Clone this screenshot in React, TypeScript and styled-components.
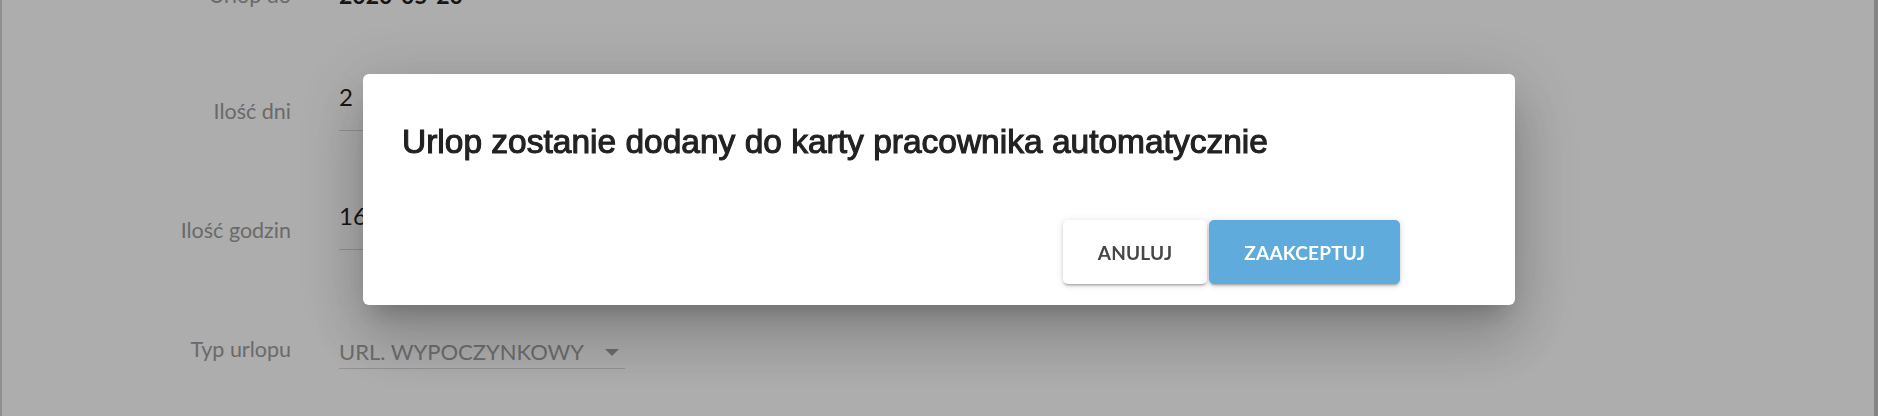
import React from "react";
import styled, { createGlobalStyle } from "styled-components";

const GlobalStyle = createGlobalStyle`
  html, body {
    margin: 0;
    padding: 0;
    background: #ffffff;
    font-family: Lato, "Open Sans", sans-serif;
    overflow: hidden;
  }
  * { box-sizing: border-box; }
`;

const Page = styled.div`
  width: 1878px;
  height: 416px;
  overflow: hidden;
  background: #ffffff;
  border-left: 2px solid #d3d3d3;
  border-right: 4px solid #c4c4c4;
`;

const Form = styled.div`
  display: flex;
  flex-direction: column;
  margin-top: -111px;
`;

const Row = styled.div`
  display: grid;
  grid-template-columns: 289px 286px;
  column-gap: 48px;
  align-items: end;
  height: 119px;
`;

const Label = styled.div`
  font-family: Lato, sans-serif;
  font-size: 21.5px;
  line-height: 24px;
  color: #9c9c9c;
  text-align: right;
  margin-bottom: 4px;
  white-space: nowrap;
`;

const StaticLabel = styled(Label)`
  margin-bottom: 1px;
`;

const StaticValue = styled.div`
  font-family: Lato, sans-serif;
  font-size: 23px;
  font-weight: 700;
  line-height: 24px;
  color: #222222;
  margin-bottom: 1px;
`;

const Field = styled.div<{ $select?: boolean }>`
  display: flex;
  align-items: center;
  justify-content: space-between;
  border-bottom: 1px solid #d6d6d6;
  padding-bottom: ${(p) => (p.$select ? "4px" : "21px")};
  margin-bottom: -4px;
`;

const InputValue = styled.span`
  font-family: Lato, sans-serif;
  font-size: 24px;
  line-height: 24px;
  color: #222222;
`;

const SelectValue = styled.span`
  font-family: Lato, sans-serif;
  font-size: 22px;
  line-height: 24px;
  color: #a0a0a0;
  white-space: nowrap;
`;

const Arrow = styled.span`
  width: 0;
  height: 0;
  margin-right: 6px;
  border-left: 7px solid transparent;
  border-right: 7px solid transparent;
  border-top: 7px solid #a0a0a0;
`;

const Overlay = styled.div`
  position: fixed;
  inset: 0;
  background: rgba(0, 0, 0, 0.32);
  display: flex;
  justify-content: center;
  align-items: flex-start;
  padding-top: 74px;
`;

const Dialog = styled.div`
  width: 1152px;
  background: #ffffff;
  border-radius: 6px;
  padding: 48px 115px 21px 39px;
  display: flex;
  flex-direction: column;
  box-shadow: 0 16px 22px -10px rgba(0, 0, 0, 0.2),
    0 36px 57px 4px rgba(0, 0, 0, 0.14),
    0 13px 69px 12px rgba(0, 0, 0, 0.12);
`;

const Title = styled.h2`
  margin: 0;
  font-family: "Helvetica Neue", "Liberation Sans", Arial, sans-serif;
  font-size: 33.5px;
  font-weight: 400;
  line-height: 40px;
  color: #222222;
  -webkit-text-stroke: 1.1px #222222;
  white-space: nowrap;
`;

const Actions = styled.div`
  display: flex;
  justify-content: flex-end;
  gap: 2px;
  margin-top: 58px;
`;

const Button = styled.button<{ $primary?: boolean }>`
  height: 64px;
  padding: 0 35px;
  border: none;
  border-radius: 5px;
  font-family: Lato, sans-serif;
  font-size: 19px;
  font-weight: 700;
  letter-spacing: 0.2px;
  cursor: pointer;
  background: ${(p) => (p.$primary ? "#5eabdc" : "#ffffff")};
  color: ${(p) => (p.$primary ? "#ffffff" : "#474747")};
  box-shadow: 0 3px 2px -2px rgba(0, 0, 0, 0.2),
    0 2px 3px 0 rgba(0, 0, 0, 0.14),
    0 1px 8px 0 rgba(0, 0, 0, 0.12);
`;

export default function App() {
  return (
    <>
      <GlobalStyle />
      <Page>
        <Form>
          <Row>
            <StaticLabel>Urlop do</StaticLabel>
            <StaticValue>2020-05-20</StaticValue>
          </Row>
          <Row>
            <Label>Ilość dni</Label>
            <Field>
              <InputValue>2</InputValue>
            </Field>
          </Row>
          <Row>
            <Label>Ilość godzin</Label>
            <Field>
              <InputValue>16</InputValue>
            </Field>
          </Row>
          <Row>
            <Label>Typ urlopu</Label>
            <Field $select>
              <SelectValue>URL. WYPOCZYNKOWY</SelectValue>
              <Arrow />
            </Field>
          </Row>
        </Form>
      </Page>
      <Overlay>
        <Dialog>
          <Title>Urlop zostanie dodany do karty pracownika automatycznie</Title>
          <Actions>
            <Button>ANULUJ</Button>
            <Button $primary>ZAAKCEPTUJ</Button>
          </Actions>
        </Dialog>
      </Overlay>
    </>
  );
}
